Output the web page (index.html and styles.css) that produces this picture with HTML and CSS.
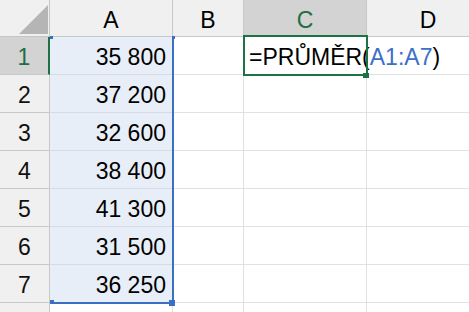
FILE: index.html
```html
<!DOCTYPE html>
<html lang="cs">
<head>
<meta charset="utf-8">
<title>Sheet</title>
<link rel="stylesheet" href="styles.css">
</head>
<body>
<div class="sheet">
  <div class="corner"><span class="tri"></span></div>
  <div class="ch">A</div>
  <div class="ch">B</div>
  <div class="ch sel">C</div>
  <div class="ch">D</div>

  <div class="rh sel">1</div>
  <div class="c num rng first">35 800
    <div class="range"><i class="h tl"></i><i class="h tr"></i><i class="h bl"></i><i class="h br"></i></div>
  </div>
  <div class="c"></div>
  <div class="c active">=PRŮMĚR(<span class="ref">A1:A7</span>)</div>
  <div class="c"></div>

  <div class="rh">2</div>
  <div class="c num rng">37 200</div>
  <div class="c"></div><div class="c"></div><div class="c"></div>

  <div class="rh">3</div>
  <div class="c num rng">32 600</div>
  <div class="c"></div><div class="c"></div><div class="c"></div>

  <div class="rh">4</div>
  <div class="c num rng">38 400</div>
  <div class="c"></div><div class="c"></div><div class="c"></div>

  <div class="rh">5</div>
  <div class="c num rng">41 300</div>
  <div class="c"></div><div class="c"></div><div class="c"></div>

  <div class="rh">6</div>
  <div class="c num rng">31 500</div>
  <div class="c"></div><div class="c"></div><div class="c"></div>

  <div class="rh">7</div>
  <div class="c num rng">36 250</div>
  <div class="c"></div><div class="c"></div><div class="c"></div>

  <div class="rh last"></div>
  <div class="c last"></div><div class="c last"></div><div class="c last"></div><div class="c last"></div>
</div>
</body>
</html>
```

FILE: styles.css
```css
html, body {
  margin: 0;
  background: #fff;
}
body {
  width: 469px;
  height: 312px;
  overflow: hidden;
  font-family: "Liberation Sans", Arial, sans-serif;
  font-size: 23px;
  color: #000;
}
.sheet {
  display: grid;
  grid-template-columns: 50px 123px 71px 123px 123px;
  grid-template-rows: 37px repeat(7, 38px) 9px;
}
.sheet > div {
  box-sizing: border-box;
  border-right: 1px solid #e1e1e1;
  border-bottom: 1px solid #e1e1e1;
  line-height: 23px;
  white-space: nowrap;
  display: flex;
  align-items: flex-end;
  padding-bottom: 5px;
}
.sheet > .last {
  padding-bottom: 0;
  border-bottom: 0;
}
.sheet > .corner {
  background: #f0f0f0;
  border-color: #c6c6c6;
  justify-content: flex-end;
  padding: 0 1px 2px 0;
}
.tri {
  width: 29px;
  height: 29px;
  background: #b5b5b5;
  clip-path: polygon(100% 0, 100% 100%, 0 100%);
}
.sheet > .ch {
  background: #f0f0f0;
  border-color: #c8c8c8;
  justify-content: center;
  padding-bottom: 4px;
}
.sheet > .ch.sel {
  background: #d3d3d3;
  color: #1e6e42;
  border-bottom: 2px solid #1e7145;
  padding-bottom: 3px;
}
.sheet > .rh {
  background: #f0f0f0;
  border-color: #c8c8c8;
  justify-content: center;
  color: #111;
}
.sheet > .rh.sel {
  background: #d3d3d3;
  color: #1e6e42;
  border-right: 2px solid #1e7145;
}
.sheet > .rng {
  background: #e8eef8;
  border-bottom-color: #d6dce6;
}
.num {
  justify-content: flex-end;
  padding-right: 6px;
}
.first {
  position: relative;
}
.range {
  position: absolute;
  left: 0;
  top: -1px;
  width: 124px;
  height: 268px;
  box-sizing: border-box;
  border-right: 2px solid #3b6fc4;
  border-bottom: 2px solid #3b6fc4;
}
.h {
  position: absolute;
  background: #3b6fc4;
}
.h.tl { left: 0; top: 0; width: 3px; height: 3px; }
.h.tr { left: 122px; top: 0; width: 3px; height: 3px; }
.h.bl { left: 0; top: 264px; width: 4px; height: 4px; }
.h.br { left: 119px; top: 264px; width: 6px; height: 6px; }
.sheet > .active {
  position: relative;
  padding-left: 5px;
  border-right-color: transparent;
}
.active::before {
  content: "";
  position: absolute;
  left: -1px;
  top: -2px;
  width: 125px;
  height: 41px;
  box-sizing: border-box;
  border: 2px solid #1e7145;
}
.active::after {
  content: "";
  position: absolute;
  left: 119px;
  top: 36px;
  width: 6px;
  height: 5px;
  background: #1e7145;
}
.ref {
  color: #3b6fc8;
}
```
